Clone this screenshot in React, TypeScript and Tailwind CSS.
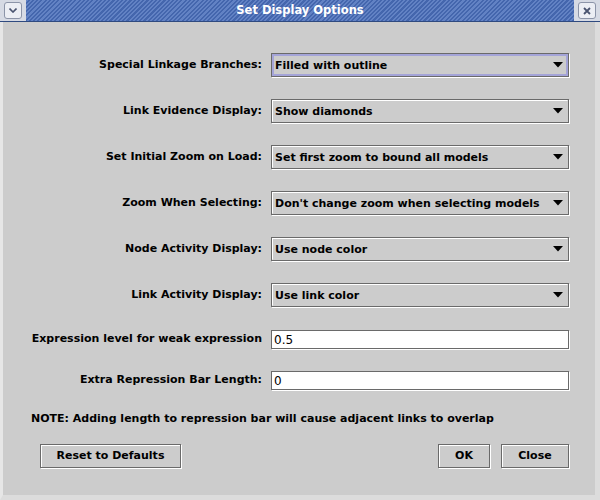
import React from "react";

const font = "font-['DejaVu_Sans',sans-serif]";

function Arrow() {
    return (
        <svg width="10" height="6" viewBox="0 0 10 6" className="shrink-0">
            <path d="M0 0H10L5 5.5Z" fill="#000" />
        </svg>
    );
}

function Combo({ value, focused }: { value: string; focused?: boolean }) {
    return (
        <div className="h-[24px] border border-[#6a6a6a] shadow-[1px_1px_0_#ffffff]">
            <div
                className={
                    focused
                        ? "flex h-full items-center justify-between border-2 border-[#a4a4d8] pl-[1px] pr-[3px]"
                        : "flex h-full items-center justify-between border border-t-white border-l-white border-r-[#cccccc] border-b-[#cccccc] pl-[2px] pr-[4px]"
                }
            >
                <span className="whitespace-nowrap text-[11px] font-bold leading-none text-black">{value}</span>
                <Arrow />
            </div>
        </div>
    );
}

function Field({ value }: { value: string }) {
    return (
        <div className="flex h-[19px] items-center border border-[#6a6a6a] bg-white pl-[2px] shadow-[1px_1px_0_#ffffff]">
            <span className="text-[12px] leading-none text-black">{value}</span>
        </div>
    );
}

function Button({ label, className }: { label: string; className: string }) {
    return (
        <div
            className={`flex h-[24px] items-center justify-center border border-[#6a6a6a] shadow-[1px_1px_0_#ffffff,inset_1px_1px_0_#ffffff] text-[11px] font-bold text-black ${className}`}
        >
            {label}
        </div>
    );
}

const combos: [string, string][] = [
    ["Special Linkage Branches:", "Filled with outline"],
    ["Link Evidence Display:", "Show diamonds"],
    ["Set Initial Zoom on Load:", "Set first zoom to bound all models"],
    ["Zoom When Selecting:", "Don't change zoom when selecting models"],
    ["Node Activity Display:", "Use node color"],
    ["Link Activity Display:", "Use link color"],
];

const labelCls = "flex items-center justify-end whitespace-nowrap text-[11px] font-bold text-black";

export default function App() {
    return (
        <div className={`flex h-[500px] w-[600px] flex-col overflow-hidden bg-[#cccccc] ${font}`}>
            {/* title bar */}
            <div className="flex h-[22px] shrink-0 items-stretch border-b border-[#2f4a80] bg-[#d6dae4]">
                <div className="flex w-[26px] items-center justify-center">
                    <div className="flex h-[17px] w-[18px] items-center justify-center rounded-[3px] border border-[#8c94a8] bg-[#eceef4]">
                        <svg width="8" height="5" viewBox="0 0 8 5">
                            <path d="M0.5 0.5L4 4L7.5 0.5" stroke="#4a5470" strokeWidth="1.6" fill="none" />
                        </svg>
                    </div>
                </div>
                <div className="flex flex-1 items-center justify-center bg-[repeating-linear-gradient(135deg,#6282c4_0px,#6282c4_1.5px,#4466ad_1.5px,#4466ad_3px)]">
                    <span className="text-[11.5px] font-bold text-white">Set Display Options</span>
                </div>
                <div className="flex w-[26px] items-center justify-center">
                    <div className="flex h-[17px] w-[18px] items-center justify-center rounded-[3px] border border-[#8c94a8] bg-[#eceef4]">
                        <svg width="8" height="8" viewBox="0 0 8 8">
                            <path d="M1 1L7 7M7 1L1 7" stroke="#4a5470" strokeWidth="1.8" />
                        </svg>
                    </div>
                </div>
            </div>

            {/* body */}
            <div className="flex flex-1 border-l-[3px] border-r-[5px] border-b-[5px] border-l-[#e6e6e6] border-r-[#dcdcdc] border-b-[#dcdcdc]">
                <div className="flex flex-1 flex-col pl-[19px] pt-[31px]">
                    <div className="grid grid-cols-[240px_298px] gap-x-[9px] gap-y-[22px]">
                        {combos.map(([label, value], i) => (
                            <React.Fragment key={label}>
                                <div className={labelCls}>{label}</div>
                                <Combo value={value} focused={i === 0} />
                            </React.Fragment>
                        ))}
                    </div>
                    <div className="mt-[23px] grid grid-cols-[240px_298px] gap-x-[9px] gap-y-[22px]">
                        <div className={labelCls}>Expression level for weak expression</div>
                        <Field value="0.5" />
                        <div className={labelCls}>Extra Repression Bar Length:</div>
                        <Field value="0" />
                    </div>
                    <div className="mt-[22px] whitespace-nowrap pl-[9px] text-[11px] font-bold leading-[14px] text-black">
                        NOTE: Adding length to repression bar will cause adjacent links to overlap
                    </div>
                    <div className="mt-[18px] flex items-center pl-[18px]">
                        <Button label="Reset to Defaults" className="w-[141px]" />
                        <div className="flex-1" />
                        <Button label="OK" className="w-[52px]" />
                        <Button label="Close" className="ml-[11px] w-[68px]" />
                        <div className="w-[26px]" />
                    </div>
                </div>
            </div>
        </div>
    );
}
